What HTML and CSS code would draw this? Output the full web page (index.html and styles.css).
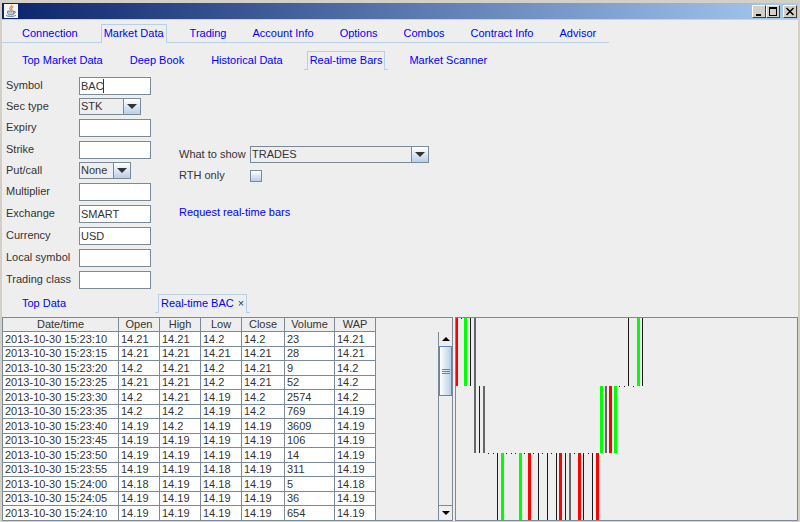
FILE: index.html
```html
<!DOCTYPE html>
<html lang="en">
<head>
    <meta charset="UTF-8">
    <meta name="viewport" content="width=device-width, initial-scale=1.0">
    <title>Real-time Bars</title>
    <link rel="stylesheet" href="styles.css">
</head>
<body>

    <header class="titlebar">
        <svg class="java-icon" viewBox="0 0 14 14" aria-hidden="true">
            <rect width="14" height="14" fill="#f4f4f2"/>
            <path d="M7.6 1c.8 1.6-2.4 2.2-1.8 3.6.2.6.9 1 1 1.7M9.5 2.6c-1.4.7-2.3 1.3-1.8 2.2.4.6.5 1 0 1.6" fill="none" stroke="#e0842a" stroke-width="1.1"/>
            <path d="M3.6 7h6.2v2.2c0 1-.7 1.6-1.6 1.6h-3c-.9 0-1.6-.6-1.6-1.6z" fill="#b9c8d6" stroke="#54708c" stroke-width=".7"/>
            <path d="M9.8 7.4c2.4-.4 2.2 2.1-.4 2.2M2 11.4c1.4 1.4 8 1.4 9.8 0" fill="none" stroke="#54708c" stroke-width=".9"/>
        </svg>
        <div class="window-buttons">
            <button type="button" aria-label="Minimize"><svg viewBox="0 0 12 11"><path d="M3 8h5v2H3z"/></svg></button>
            <button type="button" aria-label="Maximize"><svg viewBox="0 0 12 11"><path d="M2 1h8v9H2zM3 3v6h6V3z" fill-rule="evenodd"/></svg></button>
            <button type="button" class="close" aria-label="Close"><svg viewBox="0 0 12 11"><path d="M2.500 2l7 7M9.500 2l-7 7" stroke="#000" stroke-width="1.500"/></svg></button>
        </div>
    </header>

    <nav class="tabs tabs-main">
        <span class="tab"><a href="#">Connection</a></span>
        <span class="tab selected"><a href="#">Market Data</a></span>
        <span class="tab"><a href="#">Trading</a></span>
        <span class="tab"><a href="#">Account Info</a></span>
        <span class="tab"><a href="#">Options</a></span>
        <span class="tab"><a href="#">Combos</a></span>
        <span class="tab"><a href="#">Contract Info</a></span>
        <span class="tab"><a href="#">Advisor</a></span>
    </nav>

    <nav class="tabs tabs-market">
        <span class="tab"><a href="#">Top Market Data</a></span>
        <span class="tab"><a href="#">Deep Book</a></span>
        <span class="tab"><a href="#">Historical Data</a></span>
        <span class="tab selected"><a href="#">Real-time Bars</a></span>
        <span class="tab"><a href="#">Market Scanner</a></span>
    </nav>

    <form class="request">
        <div class="contract">
            <div class="row">
                <label for="symbol">Symbol</label>
                <span class="field"><input type="text" id="symbol" value="BAC"><span class="caret"></span></span>
            </div>
            <div class="row row-combo">
                <label for="secType">Sec type</label>
                <span class="combo combo-sec">
                    <select id="secType"><option>STK</option></select>
                    <span class="arrow"><svg viewBox="0 0 10 5"><path d="M0 0h10L5 5z"/></svg></span>
                </span>
            </div>
            <div class="row">
                <label for="expiry">Expiry</label>
                <input type="text" id="expiry">
            </div>
            <div class="row">
                <label for="strike">Strike</label>
                <input type="text" id="strike">
            </div>
            <div class="row row-combo">
                <label for="putCall">Put/call</label>
                <span class="combo combo-put">
                    <select id="putCall"><option>None</option></select>
                    <span class="arrow"><svg viewBox="0 0 10 5"><path d="M0 0h10L5 5z"/></svg></span>
                </span>
            </div>
            <div class="row">
                <label for="multiplier">Multiplier</label>
                <input type="text" id="multiplier">
            </div>
            <div class="row">
                <label for="exchange">Exchange</label>
                <input type="text" id="exchange" value="SMART">
            </div>
            <div class="row">
                <label for="currency">Currency</label>
                <input type="text" id="currency" value="USD">
            </div>
            <div class="row">
                <label for="localSymbol">Local symbol</label>
                <input type="text" id="localSymbol">
            </div>
            <div class="row">
                <label for="tradingClass">Trading class</label>
                <input type="text" id="tradingClass">
            </div>
        </div>

        <div class="options">
            <div class="row row-combo">
                <label for="whatToShow">What to show</label>
                <span class="combo combo-show">
                    <select id="whatToShow"><option>TRADES</option></select>
                    <span class="arrow"><svg viewBox="0 0 10 5"><path d="M0 0h10L5 5z"/></svg></span>
                </span>
            </div>
            <div class="row">
                <label for="rthOnly">RTH only</label>
                <input type="checkbox" id="rthOnly">
            </div>
            <a class="submit" href="#">Request real-time bars</a>
        </div>
    </form>

    <nav class="tabs tabs-results">
        <span class="tab tab-top"><a href="#">Top Data</a></span>
        <span class="tab selected"><a href="#">Real-time BAC <span class="tab-close">×</span></a></span>
    </nav>

    <main class="results">
        <section class="table-pane">
            <table>
                <thead>
                    <tr>
                        <th class="col-date">Date/time</th>
                        <th class="col-price">Open</th>
                        <th class="col-price">High</th>
                        <th class="col-price">Low</th>
                        <th class="col-close">Close</th>
                        <th class="col-volume">Volume</th>
                        <th class="col-price">WAP</th>
                    </tr>
                </thead>
                <tbody>
                    <tr><td>2013-10-30 15:23:10</td><td>14.21</td><td>14.21</td><td>14.2</td><td>14.2</td><td>23</td><td>14.21</td></tr>
                    <tr><td>2013-10-30 15:23:15</td><td>14.21</td><td>14.21</td><td>14.21</td><td>14.21</td><td>28</td><td>14.21</td></tr>
                    <tr><td>2013-10-30 15:23:20</td><td>14.2</td><td>14.21</td><td>14.2</td><td>14.21</td><td>9</td><td>14.2</td></tr>
                    <tr><td>2013-10-30 15:23:25</td><td>14.21</td><td>14.21</td><td>14.2</td><td>14.21</td><td>52</td><td>14.2</td></tr>
                    <tr><td>2013-10-30 15:23:30</td><td>14.2</td><td>14.21</td><td>14.19</td><td>14.2</td><td>2574</td><td>14.2</td></tr>
                    <tr><td>2013-10-30 15:23:35</td><td>14.2</td><td>14.2</td><td>14.19</td><td>14.2</td><td>769</td><td>14.19</td></tr>
                    <tr><td>2013-10-30 15:23:40</td><td>14.19</td><td>14.2</td><td>14.19</td><td>14.19</td><td>3609</td><td>14.19</td></tr>
                    <tr><td>2013-10-30 15:23:45</td><td>14.19</td><td>14.19</td><td>14.19</td><td>14.19</td><td>106</td><td>14.19</td></tr>
                    <tr><td>2013-10-30 15:23:50</td><td>14.19</td><td>14.19</td><td>14.19</td><td>14.19</td><td>14</td><td>14.19</td></tr>
                    <tr><td>2013-10-30 15:23:55</td><td>14.19</td><td>14.19</td><td>14.18</td><td>14.19</td><td>311</td><td>14.19</td></tr>
                    <tr><td>2013-10-30 15:24:00</td><td>14.18</td><td>14.19</td><td>14.18</td><td>14.19</td><td>5</td><td>14.18</td></tr>
                    <tr><td>2013-10-30 15:24:05</td><td>14.19</td><td>14.19</td><td>14.19</td><td>14.19</td><td>36</td><td>14.19</td></tr>
                    <tr><td>2013-10-30 15:24:10</td><td>14.19</td><td>14.19</td><td>14.19</td><td>14.19</td><td>654</td><td>14.19</td></tr>
                </tbody>
            </table>
            <div class="scrollbar">
                <button type="button" aria-label="Scroll up"><svg viewBox="0 0 8 4"><path d="M0 4h8L4 0z"/></svg></button>
                <div class="thumb"><span class="grip"></span></div>
                <div class="track"></div>
                <button type="button" aria-label="Scroll down"><svg viewBox="0 0 8 4"><path d="M0 0h8L4 4z"/></svg></button>
            </div>
        </section>
        <section class="chart-pane">
            <svg id="chart" width="341" height="202" shape-rendering="crispEdges"></svg>
        </section>
    </main>

    <script>
        const RED = '#ff0000';
        const GREEN = '#00ff00';
        const BLACK = '#1c1c1c';
        const GRAY = '#666666';
        const barWidth = { [RED]: 3, [GREEN]: 3, [BLACK]: 1, [GRAY]: 2 };

        // y of the 14.21, 14.20, 14.19 and 14.18 levels
        const levels = [0, 68, 135, 202];

        // color, high level, low level (same level = flat bar)
        const bars = [
            [RED, 0, 1], [BLACK, 0, 0], [GREEN, 0, 1], [BLACK, 0, 1], [GRAY, 0, 2],
            [BLACK, 1, 2], [GRAY, 1, 2], [BLACK, 2, 2], [BLACK, 2, 2], [BLACK, 2, 3],
            [GREEN, 2, 3], [BLACK, 2, 2], [BLACK, 2, 2], [BLACK, 2, 2], [GREEN, 2, 3],
            [BLACK, 2, 2], [RED, 2, 3], [BLACK, 2, 2], [BLACK, 2, 3], [BLACK, 2, 2],
            [BLACK, 2, 3], [BLACK, 2, 2], [BLACK, 2, 3], [RED, 2, 3], [BLACK, 2, 3],
            [GRAY, 2, 3], [BLACK, 2, 2], [RED, 2, 3], [BLACK, 2, 3], [BLACK, 2, 2],
            [BLACK, 2, 3], [RED, 2, 3], [GREEN, 1, 2], [GRAY, 1, 2], [RED, 1, 2],
            [GREEN, 1, 2], [BLACK, 1, 1], [BLACK, 1, 1], [BLACK, 0, 1], [BLACK, 1, 1],
            [GREEN, 0, 1], [BLACK, 0, 1]
        ];

        function drawChart() {
            const chart = document.getElementById('chart');
            bars.forEach(([color, high, low], i) => {
                const rect = document.createElementNS('http://www.w3.org/2000/svg', 'rect');
                const width = barWidth[color];
                rect.setAttribute('x', Math.round(i * 4.53 + 0.8 - width / 2));
                rect.setAttribute('y', levels[high]);
                rect.setAttribute('width', width);
                rect.setAttribute('height', Math.max(1, levels[low] - levels[high]));
                rect.setAttribute('fill', color);
                chart.appendChild(rect);
            });
        }

        drawChart();
    </script>

</body>
</html>
```
FILE: styles.css
```css
* {
    box-sizing: border-box;
}
body {
    display: flex;
    flex-direction: column;
    min-height: 100vh;
    margin: 0;
    border: solid #d4d0c8;
    border-width: 3px 2px 1px 2px;
    background-color: #eeeeee;
    color: #333;
    font-family: "Liberation Sans", Arial, sans-serif;
    font-size: 11px;
    line-height: 13px;
}
a {
    color: #0000ff;
    text-decoration: none;
}
input, select, button {
    margin: 0;
    padding: 0;
    font: inherit;
    color: inherit;
}

/* Title bar */
.titlebar {
    display: flex;
    align-items: center;
    justify-content: space-between;
    height: 17px;
    padding: 0 1px 0 2px;
    border-bottom: 1px solid #d4d0c8;
    background: linear-gradient(to right, #0a246a, #a6caf0);
}
.java-icon {
    width: 14px;
    height: 14px;
}
.window-buttons {
    display: flex;
}
.window-buttons button {
    width: 14px;
    height: 13px;
    border: 1px solid;
    border-color: #fff #404040 #404040 #fff;
    background-color: #d4d0c8;
}
.window-buttons .close {
    margin-left: 3px;
}
.window-buttons svg {
    display: block;
    width: 12px;
    height: 11px;
}

/* Tabs */
.tabs {
    display: flex;
    padding: 8px 0 0 7px;
}
.tab {
    display: flex;
    padding: 0 10px;
}
.tab a {
    padding: 2px;
    border: 1px solid transparent;
    white-space: nowrap;
}
.tab.selected {
    position: relative;
}
.tab.selected a {
    border-color: #b8cfe5;
    border-bottom-color: #eeeeee;
}
.tab.selected::before,
.tab.selected::after {
    content: "";
    position: absolute;
    bottom: 0;
    width: 4px;
    height: 1px;
    background-color: #b8cfe5;
}
.tab.selected::before {
    left: 7px;
}
.tab.selected::after {
    right: 7px;
}
.tabs-main {
    align-self: flex-start;
    padding-top: 4px;
    background: linear-gradient(#b8cfe5, #b8cfe5) bottom / 100% 1px no-repeat;
}
.tabs-market {
    gap: 1px;
}
.tabs-results {
    padding-top: 5px;
}
.tab-top {
    min-width: 139px;
}
.tab-close {
    margin-left: 1px;
    color: #333;
}

/* Request form */
.request {
    display: flex;
    align-items: center;
    gap: 28px;
    padding: 6px 4px 0;
}
.contract, .options {
    display: flex;
    flex-direction: column;
    gap: 3px;
}
.row {
    display: flex;
    align-items: center;
    height: 19px;
}
.row-combo {
    height: 17px;
}
.row label {
    width: 73px;
}
.options .row label {
    width: 71px;
}
.field {
    position: relative;
    display: flex;
}
input[type="text"] {
    width: 72px;
    height: 18px;
    padding: 0 1px;
    border: 1px solid #7a8a99;
    background-color: #fff;
}
.caret {
    position: absolute;
    top: 2px;
    left: 24px;
    width: 1px;
    height: 14px;
    background-color: #333;
}
.combo {
    position: relative;
    display: flex;
    height: 17px;
}
.combo select {
    width: 100%;
    padding: 0 1px;
    border: 1px solid #7a8a99;
    border-radius: 0;
    background-color: #eeeeee;
    appearance: none;
}
.combo-sec {
    width: 62px;
}
.combo-put {
    width: 52px;
}
.combo-show {
    width: 179px;
}
.arrow {
    position: absolute;
    top: 0;
    right: 0;
    display: flex;
    align-items: center;
    justify-content: center;
    width: 18px;
    height: 17px;
    border: 1px solid #7a8a99;
    background: linear-gradient(#fff, #b8cfe5);
    pointer-events: none;
}
.arrow svg {
    width: 10px;
    height: 5px;
    fill: #333;
}
input[type="checkbox"] {
    width: 12px;
    height: 12px;
    border: 1px solid #7a8a99;
    background: linear-gradient(#fff, #b8cfe5);
    appearance: none;
}
.submit {
    margin-top: 18px;
}

/* Results */
.results {
    display: grid;
    flex: 1;
    grid-template-columns: 25fr 19fr;
    gap: 2px;
    padding-top: 4px;
}
.table-pane {
    display: flex;
    justify-content: space-between;
    border: solid #7a8a99;
    border-width: 1px 1px 1px 0;
}
table {
    align-self: flex-start;
    border-collapse: collapse;
    table-layout: fixed;
    width: 373px;
    margin-bottom: -1px;
}
th, td {
    padding: 0 0 0 2px;
    border: 1px solid #7a8a99;
    line-height: 12px;
    text-align: left;
    white-space: nowrap;
}
th {
    height: 13px;
    padding: 0;
    border-top: 0;
    font-weight: normal;
    text-align: center;
}
td {
    height: 14px;
    background-color: #fff;
}
tbody tr:nth-child(odd) td {
    height: 15px;
}
.col-date {
    width: 116px;
}
.col-price {
    width: 41px;
}
.col-close {
    width: 43px;
}
.col-volume {
    width: 50px;
}
.scrollbar {
    display: flex;
    flex-direction: column;
    width: 14px;
    margin-top: 14px;
    border-left: 1px solid #7a8a99;
}
.scrollbar button {
    display: flex;
    align-items: center;
    justify-content: center;
    height: 14px;
    border: 0;
    background-color: #eeeeee;
}
.scrollbar svg {
    width: 8px;
    height: 4px;
}
.thumb {
    display: flex;
    align-items: center;
    justify-content: center;
    height: 50px;
    border: 1px solid #6382bf;
    background: linear-gradient(to right, #fff, #b8cfe5);
}
.grip {
    width: 8px;
    height: 5px;
    border: solid #6382bf;
    border-width: 1px 0;
    background: linear-gradient(#6382bf, #6382bf) center / 100% 1px no-repeat;
}
.track {
    flex: 1;
    border-bottom: 1px solid #7a8a99;
}
.chart-pane {
    min-width: 0;
    border: 1px solid #7a8a99;
    overflow: hidden;
}
#chart {
    display: block;
}
```
